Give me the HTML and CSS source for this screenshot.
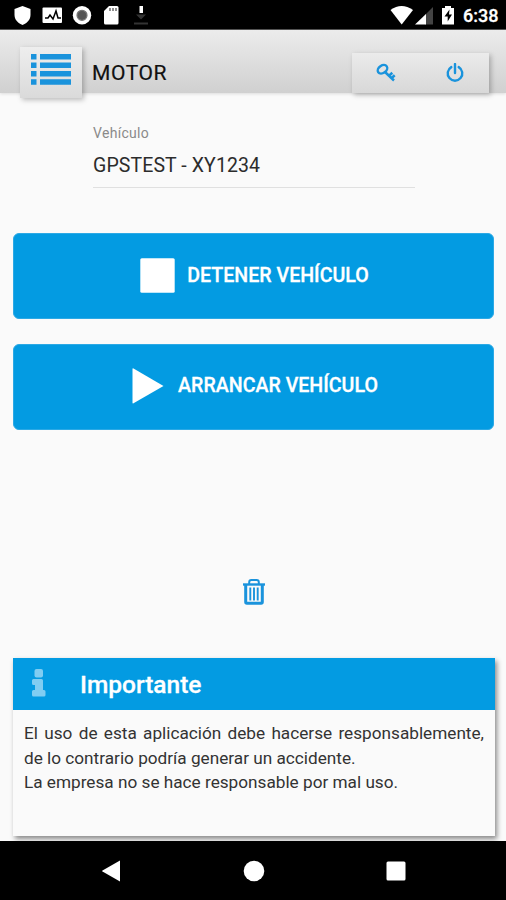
FILE: index.html
```html
<!DOCTYPE html>
<html lang="es">
<head>
    <meta charset="UTF-8">
    <meta name="viewport" content="width=device-width, initial-scale=1.0">
    <title>Motor</title>
    <link rel="stylesheet" href="styles.css">
</head>
<body>
    <div class="status-bar">
        <svg class="status-left" width="160" height="30" viewBox="0 0 160 30">
            <path fill="#fff" d="M22.500 6l8 3v6c0 5-4 8.500-8 10-4-1.500-8-5-8-10V9z"/>
            <rect x="42.500" y="7.500" width="19.500" height="15.500" rx="1" fill="#fff"/>
            <path d="M45 18h3l2-3 3 4 3-8 2 7h3" fill="none" stroke="#000" stroke-width="1.500"/>
            <circle cx="82" cy="15.300" r="9.200" fill="#fff"/>
            <circle cx="82" cy="15.300" r="5" fill="#555" stroke="#777" stroke-width="1.200"/>
            <path fill="#fff" d="M109 6h8q1.500 0 1.500 1.500V23q0 1.500-1.500 1.500h-11.500q-1.500 0-1.500-1.500V11z"/>
            <path d="M110 8v3M113 8v3M116 8v3" stroke="#555" stroke-width="1.300"/>
            <path fill="#fff" d="M139.500 6h3.500v7h-3.500z"/>
            <path fill="#333" d="M136 14.500h10l-5 5zM134 22.500h14v2h-14z"/>
        </svg>
        <svg class="status-right" width="72" height="30" viewBox="388 0 72 30">
            <path fill="#fff" d="M390.500 10q11-8 22.500 0l-11.300 14.500z"/>
            <path fill="#444" d="M433 7v17.500h-8V15z"/>
            <path fill="#fff" d="M426 14v10.500h-11z"/>
            <path fill="#fff" d="M445 6h6v2h3v16.500h-12V8h3z"/>
            <path fill="#000" d="M449.500 9.500l-5 7h3.200v5l4.300-7h-3z"/>
        </svg>
        <span class="clock">6:38</span>
    </div>

    <header class="toolbar">
        <button class="menu-btn">
            <svg width="40" height="32" viewBox="0 0 40 32" fill="#1a93dc">
                <path d="M0 0h5.500v5.500H0zM9 0h31v5.500H9zM0 8.500h5.500V14H0zM9 8.500h31V14H9zM0 17h5.500v5.500H0zM9 17h31v5.500H9zM0 25.300h5.500v5.500H0zM9 25.300h31v5.500H9z"/>
            </svg>
        </button>
        <h1>MOTOR</h1>
        <div class="actions">
            <button class="action">
                <svg width="20" height="20" viewBox="0 0 20 20" fill="none" stroke="#1a93dc">
                    <ellipse cx="6.500" cy="6.300" rx="5.200" ry="3.700" stroke-width="2.400" transform="rotate(-35 6.500 6.300)"/>
                    <path d="M9 9l9 8.500M13.300 12.500l3-2.700M15.700 15l3-2.700" stroke-width="2.500"/>
                </svg>
            </button>
            <button class="action">
                <svg width="20" height="20" viewBox="0 0 20 20" fill="none" stroke="#1a93dc" stroke-width="2.400">
                    <path d="M10 1v9" stroke-linecap="round"/>
                    <path d="M6.300 4.100a7.300 7.300 0 1 0 7.400 0" stroke-linecap="round"/>
                </svg>
            </button>
        </div>
    </header>

    <main class="content">
        <div class="field">
            <label>Vehículo</label>
            <div class="value">GPSTEST - XY1234</div>
        </div>

        <button class="big-btn stop">
            <svg width="35" height="35" viewBox="0 0 35 35"><rect x=".3" y=".3" width="34.400" height="34.400" rx="1.500" fill="#fff"/></svg>
            <span>DETENER VEHÍCULO</span>
        </button>
        <button class="big-btn start">
            <svg width="32" height="36" viewBox="0 0 32 36"><path fill="#fff" d="M.5 1q0-1 1-.5L31.500 18 1.500 35.300q-1 .5-1-.5z"/></svg>
            <span>ARRANCAR VEHÍCULO</span>
        </button>

        <button class="trash">
            <svg width="24" height="27" viewBox="0 0 24 27" fill="none" stroke="#1a93dc">
                <path d="M1 6.500h22" stroke-width="2.400"/>
                <path d="M7.200 6V4.200q0-2.200 2.200-2.200h5.200q2.200 0 2.200 2.200V6" stroke-width="2"/>
                <path d="M3.700 7v17q0 1.200 1.200 1.200h14.200q1.200 0 1.200-1.200V7" stroke-width="3"/>
                <path d="M8.300 9.500v13M12 9.500v13M15.700 9.500v13" stroke-width="1.900"/>
            </svg>
        </button>

        <section class="card">
            <div class="card-header">
                <svg width="14" height="28" viewBox="0 0 14 28" fill="#80cdf2">
                    <rect x="2.500" y="0" width="8.500" height="8.500" rx="2"/>
                    <path d="M1.500 10h8q1.500 0 1.500 1.500V21h1q1.500 0 1.500 1.500V26q0 1.500-1.500 1.500H1.500Q0 27.500 0 26v-3.500Q0 21 1.500 21H3v-5H1.500Q0 16 0 14.500v-3Q0 10 1.500 10z"/>
                </svg>
                <h2>Importante</h2>
            </div>
            <div class="card-body">
                <p>El uso de esta aplicación debe hacerse responsablemente, de lo contrario podría generar un accidente.</p>
                <p>La empresa no se hace responsable por mal uso.</p>
            </div>
        </section>
    </main>

    <nav class="nav-bar">
        <svg width="20" height="22" viewBox="0 0 20 22"><path fill="#fff" d="M18 0.500V21.500L.5 11.500q-.7-.5 0-1z"/></svg>
        <svg width="22" height="22" viewBox="0 0 22 22"><circle cx="11" cy="11" r="10.300" fill="#fff"/></svg>
        <svg width="20" height="20" viewBox="0 0 20 20"><rect x=".5" y=".5" width="19" height="19" rx="1.500" fill="#fff"/></svg>
    </nav>
</body>
</html>
```
FILE: styles.css
```css
* {
    box-sizing: border-box;
}
body {
    margin: 0;
    height: 900px;
    display: flex;
    flex-direction: column;
    overflow: hidden;
    font-family: Roboto, "Liberation Sans", sans-serif;
    background-color: #fafafa;
    color: #333;
}
button {
    border: none;
    padding: 0;
    background: none;
    font-family: inherit;
    cursor: pointer;
}
h1, h2, p {
    margin: 0;
}
svg {
    display: block;
    flex: none;
}

.status-bar {
    height: 30px;
    flex: none;
    display: flex;
    background-color: #000;
    border-bottom: 1px solid #555;
}
.status-right {
    margin-left: auto;
}
.clock {
    width: 46px;
    padding-left: 3px;
    line-height: 32px;
    font-size: 18px;
    font-weight: 500;
    color: #fff;
    -webkit-text-stroke: 0.3px #fff;
}

.toolbar {
    height: 63px;
    flex: none;
    display: flex;
    align-items: flex-start;
    padding: 17px 17px 0 20px;
    background: linear-gradient(#ececec, #d0d0d0);
    box-shadow: 0 1px 3px rgba(0, 0, 0, 0.12);
}
.menu-btn {
    display: flex;
    align-items: flex-start;
    width: 62px;
    height: 51px;
    padding: 7px 0 0 11px;
    background: linear-gradient(#eee, #dadada);
    box-shadow: 2px 2px 5px rgba(0, 0, 0, 0.25);
}
.toolbar h1 {
    margin: 13px 0 0 10px;
    font-size: 21px;
    line-height: 26px;
    font-weight: 400;
    letter-spacing: 0.6px;
    color: #111;
    -webkit-text-stroke: 0.2px #111;
}
.actions {
    display: flex;
    margin: 6px 0 0 auto;
    width: 137px;
    height: 40px;
    background: linear-gradient(#ebebeb, #d8d8d8);
    box-shadow: 2px 2px 5px rgba(0, 0, 0, 0.25);
}
.action {
    flex: 1;
    display: flex;
    justify-content: center;
    align-items: center;
}

.content {
    flex: 1;
    display: flex;
    flex-direction: column;
    padding: 0 12px 0 13px;
}
.field {
    width: 322px;
    height: 95px;
    margin-left: 80px;
    padding-top: 32px;
    border-bottom: 1px solid #e0e0e0;
}
.field label {
    display: block;
    font-size: 14px;
    line-height: 16px;
    letter-spacing: 0.3px;
    color: #8a8a8a;
}
.value {
    margin-top: 11px;
    font-size: 19.5px;
    line-height: 27px;
    letter-spacing: 0.1px;
    color: #2c2c2c;
}

.big-btn {
    display: flex;
    align-items: center;
    justify-content: center;
    gap: 12px;
    height: 86px;
    border: 1px solid #2ca9e5;
    border-radius: 6px;
    background-color: #039be2;
    color: #fff;
    font-size: 19.6px;
    font-weight: 500;
    -webkit-text-stroke: 0.3px #fff;
}
.big-btn span {
    margin-top: -1px;
}
.stop {
    margin: 45px 0 0;
    padding: 0 0 1px 2px;
}
.start {
    margin: 25px 0 0;
    padding: 0 0 2px 3px;
    gap: 14px;
}
.trash {
    margin: 148px auto 0;
}

.card {
    height: 178px;
    margin-top: 53px;
    margin-right: -1px;
    background-color: #fafafa;
    box-shadow: 2px 3px 5px rgba(0, 0, 0, 0.45);
}
.card-header {
    display: flex;
    align-items: center;
    gap: 34px;
    height: 52px;
    padding-left: 19px;
    background-color: #039be2;
}
.card-header svg {
    margin-top: -2px;
}
.card-header h2 {
    font-size: 24.5px;
    font-weight: 500;
    color: #fff;
    -webkit-text-stroke: 0.3px #fff;
}
.card-body {
    padding: 11px 11px 0 11px;
    font-size: 17.2px;
    line-height: 24.5px;
    text-align: justify;
}

.nav-bar {
    height: 59px;
    flex: none;
    display: flex;
    align-items: center;
    justify-content: space-between;
    padding: 0 100px 0 102px;
    background-color: #000;
}
```
